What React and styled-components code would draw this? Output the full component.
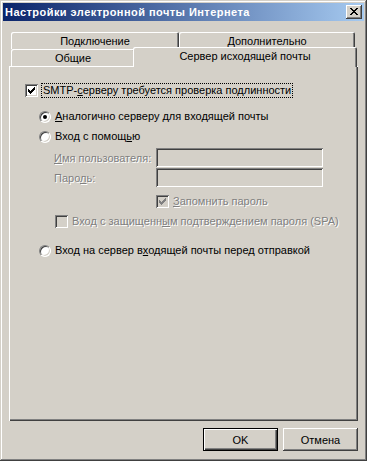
import React from 'react';
import styled, { createGlobalStyle } from 'styled-components';

const GlobalStyle = createGlobalStyle`
    html, body {
        margin: 0;
        padding: 0;
        background: #d4d0c8;
    }
    body {
        font-family: Tahoma, "Liberation Sans", Arial, sans-serif;
        font-size: 11px;
        color: #000;
    }
`;

const Window = styled.div`
    width: 367px;
    height: 461px;
    box-sizing: border-box;
    padding: 3px;
    background: #d4d0c8;
    box-shadow: inset -1px -1px #404040, inset 1px 1px #d4d0c8,
        inset -2px -2px #808080, inset 2px 2px #fff;
    display: flex;
    flex-direction: column;
`;

const TitleBar = styled.div`
    height: 18px;
    flex: none;
    display: flex;
    align-items: center;
    background: linear-gradient(to right, #0a246a, #a6caf0);
`;

const Title = styled.div`
    flex: 1;
    padding-left: 2px;
    color: #fff;
    font-weight: bold;
    font-size: 11px;
    letter-spacing: 0.45px;
    white-space: nowrap;
`;

const CloseButton = styled.div`
    width: 16px;
    height: 14px;
    margin-right: 2px;
    box-sizing: border-box;
    background: #d4d0c8;
    box-shadow: inset -1px -1px #404040, inset 1px 1px #fff, inset -2px -2px #808080;
    display: flex;
    align-items: center;
    justify-content: center;
    padding-bottom: 1px;
`;

const Body = styled.div`
    flex: 1;
    display: flex;
    flex-direction: column;
    padding: 11px 6px 7px 6px;
    min-height: 0;
`;

const TabRow = styled.div`
    height: 17px;
    flex: none;
    display: flex;
    align-items: flex-end;
    padding-left: 2px;
`;

const Tab = styled.div`
    width: ${p => p.w}px;
    height: ${p => p.active ? 20 : 17}px;
    margin: ${p => p.active ? '0 -2px -1px -2px' : '0'};
    position: ${p => p.active ? 'relative' : 'static'};
    z-index: ${p => p.active ? 1 : 'auto'};
    box-sizing: border-box;
    flex: none;
    display: flex;
    align-items: center;
    justify-content: center;
    padding-bottom: ${p => p.active ? 2 : 0}px;
    background: #d4d0c8;
    border-radius: 2px 2px 0 0;
    box-shadow: inset 1px 1px #fff, inset -1px 0 #404040, inset -2px 0 #808080;
    white-space: nowrap;
`;

const Panel = styled.div`
    flex: 1;
    display: flex;
    flex-direction: column;
    padding: 18px 0 0 16px;
    box-shadow: inset 1px 1px #fff, inset -1px -1px #404040, inset -2px -2px #808080;
`;

const Row = styled.div`
    display: flex;
    align-items: center;
    height: ${p => p.h || 13}px;
    margin-top: ${p => p.top || 0}px;
    margin-left: ${p => p.indent || 0}px;
    white-space: nowrap;
`;

const Label = styled.span`
    margin-left: ${p => p.gap || 4}px;
    line-height: 13px;
    color: ${p => p.disabled ? '#808080' : '#000'};
    text-shadow: ${p => p.disabled ? '1px 1px #fff' : 'none'};
    outline: ${p => p.focused ? '1px dotted #000' : 'none'};
    outline-offset: 0px;
    padding: ${p => p.focused ? '0 1px' : '0'};
`;

const FieldLabel = styled.span`
    width: 102px;
    flex: none;
    color: #808080;
    text-shadow: 1px 1px #fff;
`;

const TextBox = styled.div`
    width: 167px;
    height: 19px;
    box-sizing: border-box;
    background: #d4d0c8;
    box-shadow: inset 1px 1px #808080, inset -1px -1px #fff,
        inset 2px 2px #404040, inset -2px -2px #d4d0c8;
`;

const Box = styled.div`
    width: 13px;
    height: 13px;
    flex: none;
    box-sizing: border-box;
    background: ${p => p.disabled ? '#d4d0c8' : '#fff'};
    box-shadow: inset 1px 1px #808080, inset -1px -1px #fff,
        inset 2px 2px #404040, inset -2px -2px #d4d0c8;
    svg {
        display: block;
    }
`;

const Radio = styled.div`
    width: 12px;
    height: 12px;
    flex: none;
    box-sizing: border-box;
    border-radius: 50%;
    border: 1px solid;
    border-color: #808080 #fff #fff #808080;
    background: #fff;
    box-shadow: inset 1px 1px #404040, inset -1px -1px #d4d0c8;
    display: flex;
    align-items: center;
    justify-content: center;
`;

const Dot = styled.div`
    width: 4px;
    height: 4px;
    border-radius: 50%;
    background: #000;
`;

const Footer = styled.div`
    flex: none;
    display: flex;
    justify-content: flex-end;
    gap: 5px;
    margin-top: 7px;
`;

const Button = styled.div`
    width: 75px;
    height: 23px;
    box-sizing: border-box;
    display: flex;
    align-items: center;
    justify-content: center;
    background: #d4d0c8;
    border: ${p => p.primary ? '1px solid #000' : 'none'};
    box-shadow: ${p => p.primary
        ? 'inset 1px 1px #fff, inset -1px -1px #404040, inset -2px -2px #808080'
        : 'inset -1px -1px #404040, inset 1px 1px #fff, inset -2px -2px #808080'};
`;

const checkCols = [[3, 5], [4, 6], [5, 7], [6, 6], [7, 5], [8, 4], [9, 3]];

const Check = ({ color }) =>
    <svg width="13" height="13" viewBox="0 0 13 13" shapeRendering="crispEdges">
        {checkCols.map(([x, y]) =>
            <rect key={x} x={x} y={y} width="1" height="3" fill={color} />
        )}
    </svg>;

const CheckBox = ({ checked, disabled }) =>
    <Box disabled={disabled}>
        {checked && <Check color={disabled ? '#808080' : '#000'} />}
    </Box>;

const closeRows = [[0, 1, 6, 7], [1, 2, 5, 6], [2, 5], [3, 4], [2, 5], [1, 2, 5, 6], [0, 1, 6, 7]];

const CloseGlyph = () =>
    <svg width="8" height="7" viewBox="0 0 8 7" shapeRendering="crispEdges">
        {closeRows.map((r, y) =>
            r.length === 4
                ? <g key={y}>
                    <rect x={r[0]} y={y} width="2" height="1" fill="#000" />
                    <rect x={r[2]} y={y} width="2" height="1" fill="#000" />
                </g>
                : <rect key={y} x={r[0]} y={y} width={r[1] - r[0] + 1} height="1" fill="#000" />
        )}
    </svg>;

const App = () =>
    <>
        <GlobalStyle />
        <Window>
            <TitleBar>
                <Title>Настройки электронной почты Интернета</Title>
                <CloseButton><CloseGlyph /></CloseButton>
            </TitleBar>
            <Body>
                <TabRow>
                    <Tab w={168}>Подключение</Tab>
                    <Tab w={176}>Дополнительно</Tab>
                </TabRow>
                <TabRow>
                    <Tab w={124}>Общие</Tab>
                    <Tab w={224} active>Сервер исходящей почты</Tab>
                </TabRow>
                <Panel>
                    <Row>
                        <CheckBox checked />
                        <Label focused>SMTP-<u>с</u>ерверу требуется проверка подлинности</Label>
                    </Row>
                    <Row top={13} indent={14}>
                        <Radio><Dot /></Radio>
                        <Label><u>А</u>налогично серверу для входящей почты</Label>
                    </Row>
                    <Row top={7} indent={14}>
                        <Radio />
                        <Label>Вход с помощ<u>ь</u>ю</Label>
                    </Row>
                    <Row top={5} indent={29} h={19}>
                        <FieldLabel><u>И</u>мя пользователя:</FieldLabel>
                        <TextBox />
                    </Row>
                    <Row top={1} indent={29} h={19}>
                        <FieldLabel>Паро<u>л</u>ь:</FieldLabel>
                        <TextBox />
                    </Row>
                    <Row top={8} indent={131}>
                        <CheckBox checked disabled />
                        <Label disabled><u>З</u>апомнить пароль</Label>
                    </Row>
                    <Row top={7} indent={30}>
                        <CheckBox disabled />
                        <Label disabled>Вход с защищенн<u>ы</u>м подтверждением пароля (SPA)</Label>
                    </Row>
                    <Row top={16} indent={14}>
                        <Radio />
                        <Label>Вход на сервер в<u>х</u>одящей почты перед отправкой</Label>
                    </Row>
                </Panel>
                <Footer>
                    <Button primary>OK</Button>
                    <Button>Отмена</Button>
                </Footer>
            </Body>
        </Window>
    </>;

export default App;
